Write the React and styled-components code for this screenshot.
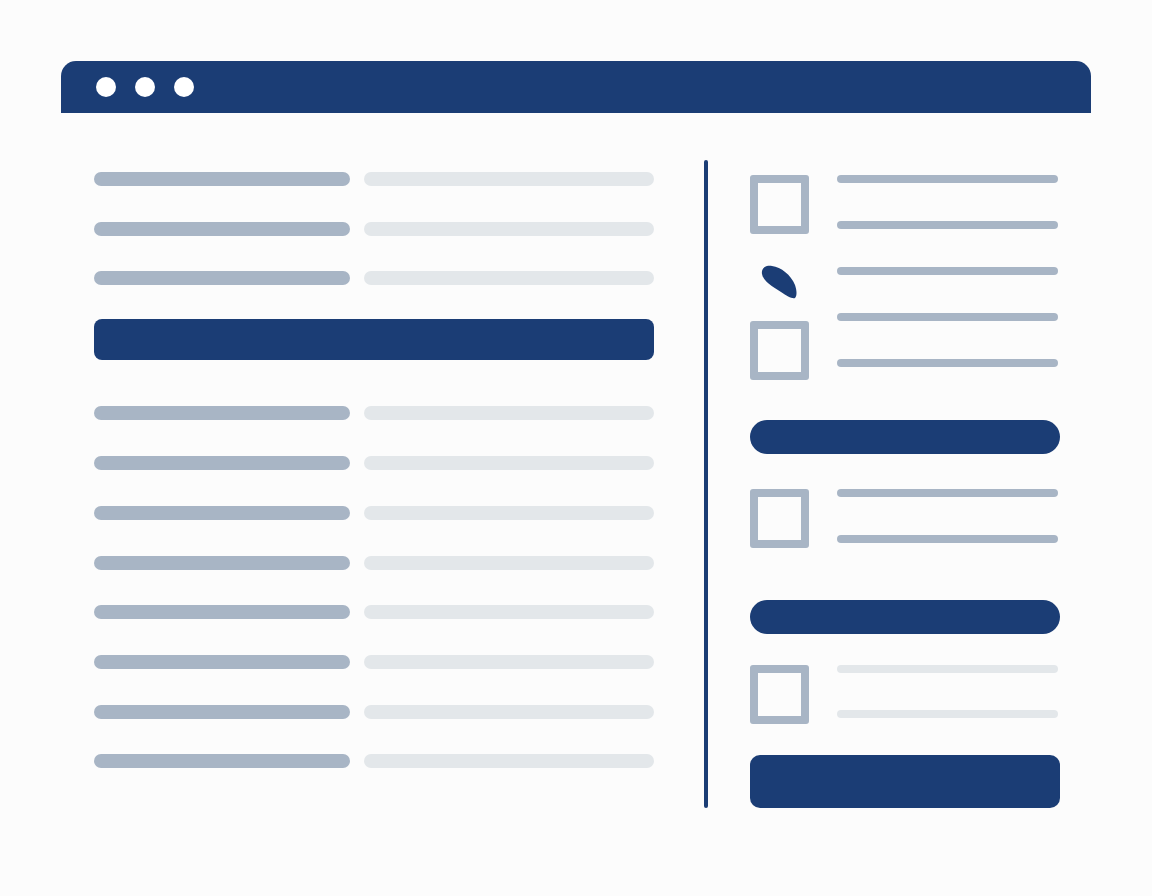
import React from 'react'
import styled, { createGlobalStyle } from 'styled-components'

const GlobalStyle = createGlobalStyle`
  html, body {
    margin: 0;
    padding: 0;
    background: #fcfcfc;
    font-family: "Liberation Sans", Arial, sans-serif;
  }
`

const BLUE = '#1b3d75'
const GRAY = '#a8b5c5'
const LIGHT = '#e3e7ea'

const Page = styled.div`
  width: 1152px;
  height: 896px;
  padding: 61px 0 0 61px;
  box-sizing: border-box;
`

const Frame = styled.div`
  width: 1030px;
`

const TitleBar = styled.div`
  height: 52px;
  background: ${BLUE};
  border-radius: 15px 15px 0 0;
  display: flex;
  align-items: center;
  gap: 19px;
  padding-left: 35px;
`

const Dot = styled.span`
  width: 20px;
  height: 20px;
  border-radius: 50%;
  background: #ffffff;
`

const Content = styled.div`
  display: flex;
  padding: 47px 0 0 33px;
`

const LeftCol = styled.div`
  width: 560px;
  padding-top: 12px;
  display: flex;
  flex-direction: column;
`

const Row = styled.div`
  display: flex;
  gap: 14px;
  margin-top: ${p => p.$mt || 0}px;
`

const Bar = styled.div`
  height: 14px;
  border-radius: 7px;
  width: ${p => p.$w}px;
  background: ${p => (p.$light ? LIGHT : GRAY)};
`

const Banner = styled.div`
  height: 41px;
  margin: 34px 0 46px;
  border-radius: 8px;
  background: ${BLUE};
`

const Divider = styled.div`
  width: 4px;
  height: 648px;
  margin-left: 50px;
  border-radius: 2px;
  background: ${BLUE};
`

const RightCol = styled.div`
  width: 310px;
  margin-left: 42px;
  padding-top: 15px;
  display: flex;
  flex-direction: column;
`

const Group = styled.div`
  display: flex;
  gap: 28px;
  margin-top: ${p => p.$mt || 0}px;
`

const Icons = styled.div`
  width: 59px;
  display: flex;
  flex-direction: column;
  align-items: flex-start;
`

const Box = styled.div`
  width: 59px;
  height: 59px;
  box-sizing: border-box;
  border: 8px solid ${GRAY};
  border-radius: 3px;
`

const Leaf = styled.svg`
  display: block;
  margin: 31px 0 22px 11px;
`

const Lines = styled.div`
  display: flex;
  flex-direction: column;
  gap: ${p => p.$gap}px;
`

const Line = styled.div`
  width: 221px;
  height: 8px;
  border-radius: 4px;
  background: ${p => (p.$light ? LIGHT : GRAY)};
`

const Pill = styled.div`
  height: 34px;
  border-radius: 17px;
  background: ${BLUE};
  margin-top: ${p => p.$mt}px;
`

const Button = styled.div`
  height: 53px;
  border-radius: 10px;
  background: ${BLUE};
  margin-top: 31px;
`

const rowTops = [0, 35.5, 35.5]
const lowerRows = [0, 36, 36, 36, 35, 36, 36, 35]

export default function App() {
  return (
    <Page>
      <GlobalStyle />
      <Frame>
        <TitleBar>
          <Dot />
          <Dot />
          <Dot />
        </TitleBar>
        <Content>
          <LeftCol>
            {rowTops.map((mt, i) => (
              <Row key={'a' + i} $mt={mt}>
                <Bar $w={256} />
                <Bar $w={290} $light />
              </Row>
            ))}
            <Banner />
            {lowerRows.map((mt, i) => (
              <Row key={'b' + i} $mt={mt}>
                <Bar $w={256} />
                <Bar $w={290} $light />
              </Row>
            ))}
          </LeftCol>
          <Divider />
          <RightCol>
            <Group>
              <Icons>
                <Box />
                <Leaf width="36" height="34" viewBox="0 0 36 34">
                  <path
                    d="M1 9 C0 3 5 0 11 1 C20 2 30 10 34 20 C36 26 36 31 34 33 C31 34 26 31 20 27 C12 22 2 16 1 9 Z"
                    fill={BLUE}
                  />
                </Leaf>
                <Box />
              </Icons>
              <Lines $gap={38}>
                <Line />
                <Line />
                <Line />
                <Line />
                <Line />
              </Lines>
            </Group>
            <Pill $mt={40} />
            <Group $mt={35}>
              <Icons>
                <Box />
              </Icons>
              <Lines $gap={38}>
                <Line />
                <Line />
              </Lines>
            </Group>
            <Pill $mt={52} />
            <Group $mt={31}>
              <Icons>
                <Box />
              </Icons>
              <Lines $gap={37}>
                <Line $light />
                <Line $light />
              </Lines>
            </Group>
            <Button />
          </RightCol>
        </Content>
      </Frame>
    </Page>
  )
}
